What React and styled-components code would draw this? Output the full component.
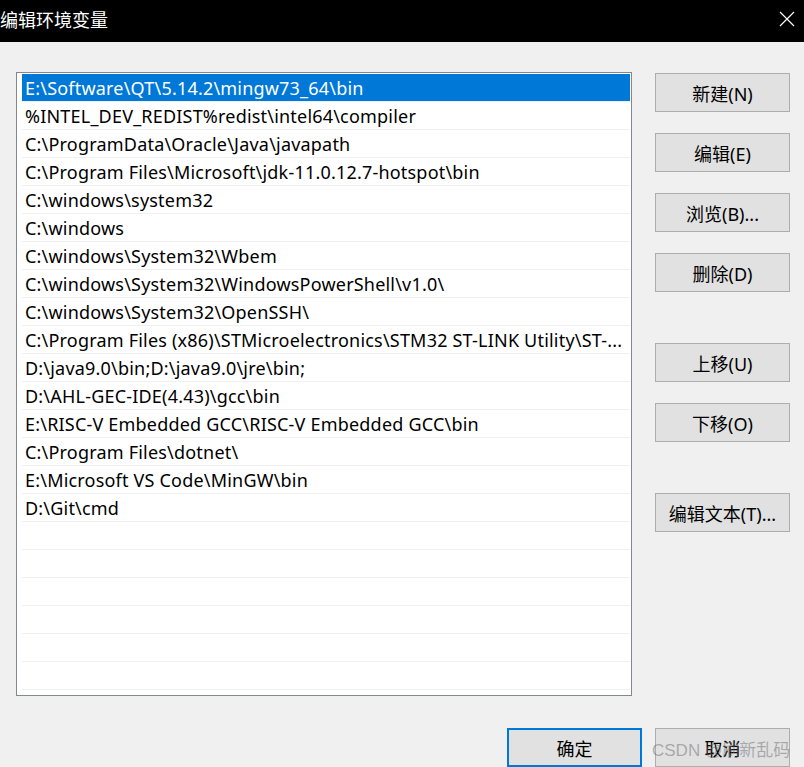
import React from "react";
import styled, { createGlobalStyle } from "styled-components";

const Global = createGlobalStyle`
  html, body { margin: 0; padding: 0; }
  body {
    width: 804px; height: 767px; overflow: hidden;
    background: #f0f0f0;
    font-family: "Noto Sans", "Noto Sans CJK SC", sans-serif;
  }
`;

const Window = styled.div`
  position: relative;
  width: 804px;
  height: 767px;
  display: flex;
  flex-direction: column;
  background: #f0f0f0;
`;

const TitleBar = styled.div`
  height: 42px;
  background: #000;
  display: flex;
  align-items: center;
  justify-content: space-between;
  flex-shrink: 0;
`;

const Title = styled.div`
  color: #fff;
  font-size: 18px;
  font-family: "Noto Sans CJK SC", sans-serif;
  margin-top: -4px;
`;

const CloseBtn = styled.div`
  width: 16px;
  height: 16px;
  margin-right: 9px;
  margin-top: -4px;
  display: flex;
`;

const Body = styled.div`
  flex: 1;
  display: flex;
  flex-direction: column;
  padding: 30px 14px 0 16px;
`;

const Main = styled.div`
  display: flex;
  gap: 23px;
`;

const ListBox = styled.div`
  width: 616px;
  height: 624px;
  box-sizing: border-box;
  border: 1px solid #828790;
  background: #fff;
  padding: 1px 1px 0 5px;
  overflow: hidden;
`;

const Row = styled.div`
  height: 27px;
  border-bottom: 1px solid #f0f0f0;
  padding: 0 3px;
  display: flex;
  align-items: center;
  font-size: 18px;
  color: ${(p) => (p.$selected ? "#fff" : "#000")};
  background: ${(p) => (p.$selected ? "#0078d7" : "transparent")};
  white-space: nowrap;
  overflow: hidden;
  letter-spacing: 0.2px;
`;

const RowText = styled.span`
  overflow: hidden;
  text-overflow: ellipsis;
  white-space: nowrap;
  display: block;
  width: 100%;
`;

const Side = styled.div`
  display: flex;
  flex-direction: column;
  padding-top: 1px;
`;

const Button = styled.div`
  width: 135px;
  height: 39px;
  box-sizing: border-box;
  border: ${(p) => (p.$primary ? "2px solid #0078d7" : "1px solid #adadad")};
  background: #e1e1e1;
  display: flex;
  align-items: center;
  justify-content: center;
  font-size: 18px;
  color: #000;
  margin-top: ${(p) => p.$gap || 0}px;
`;

const Footer = styled.div`
  display: flex;
  justify-content: flex-end;
  gap: 13px;
  margin-top: 32px;
`;

const Watermark = styled.div`
  position: absolute;
  left: 652px;
  top: 736px;
  font-size: 17px;
  color: rgba(110, 110, 110, 0.5);
  font-family: "Liberation Sans", "Noto Sans CJK SC", sans-serif;
  white-space: nowrap;
  pointer-events: none;
`;

const paths = [
  "E:\\Software\\QT\\5.14.2\\mingw73_64\\bin",
  "%INTEL_DEV_REDIST%redist\\intel64\\compiler",
  "C:\\ProgramData\\Oracle\\Java\\javapath",
  "C:\\Program Files\\Microsoft\\jdk-11.0.12.7-hotspot\\bin",
  "C:\\windows\\system32",
  "C:\\windows",
  "C:\\windows\\System32\\Wbem",
  "C:\\windows\\System32\\WindowsPowerShell\\v1.0\\",
  "C:\\windows\\System32\\OpenSSH\\",
  "C:\\Program Files (x86)\\STMicroelectronics\\STM32 ST-LINK Utility\\ST-...",
  "D:\\java9.0\\bin;D:\\java9.0\\jre\\bin;",
  "D:\\AHL-GEC-IDE(4.43)\\gcc\\bin",
  "E:\\RISC-V Embedded GCC\\RISC-V Embedded GCC\\bin",
  "C:\\Program Files\\dotnet\\",
  "E:\\Microsoft VS Code\\MinGW\\bin",
  "D:\\Git\\cmd",
];

const rows = [...paths, ...Array(6).fill("")];

const buttons = [
  { label: "新建(N)", gap: 0 },
  { label: "编辑(E)", gap: 21 },
  { label: "浏览(B)...", gap: 21 },
  { label: "删除(D)", gap: 21 },
  { label: "上移(U)", gap: 51 },
  { label: "下移(O)", gap: 21 },
  { label: "编辑文本(T)...", gap: 51 },
];

export default function App() {
  return (
    <>
      <Global />
      <Window>
        <TitleBar>
          <Title>编辑环境变量</Title>
          <CloseBtn>
            <svg width="16" height="16" viewBox="0 0 16 16">
              <path d="M1 1 L15 15 M15 1 L1 15" stroke="#fff" strokeWidth="1.2" fill="none" />
            </svg>
          </CloseBtn>
        </TitleBar>
        <Body>
          <Main>
            <ListBox>
              {rows.map((r, i) => (
                <Row key={i} $selected={i === 0}>
                  <RowText>{r}</RowText>
                </Row>
              ))}
            </ListBox>
            <Side>
              {buttons.map((b) => (
                <Button key={b.label} $gap={b.gap}>
                  {b.label}
                </Button>
              ))}
            </Side>
          </Main>
          <Footer>
            <Button $primary>确定</Button>
            <Button>取消</Button>
          </Footer>
        </Body>
        <Watermark>CSDN @刷新乱码</Watermark>
      </Window>
    </>
  );
}
